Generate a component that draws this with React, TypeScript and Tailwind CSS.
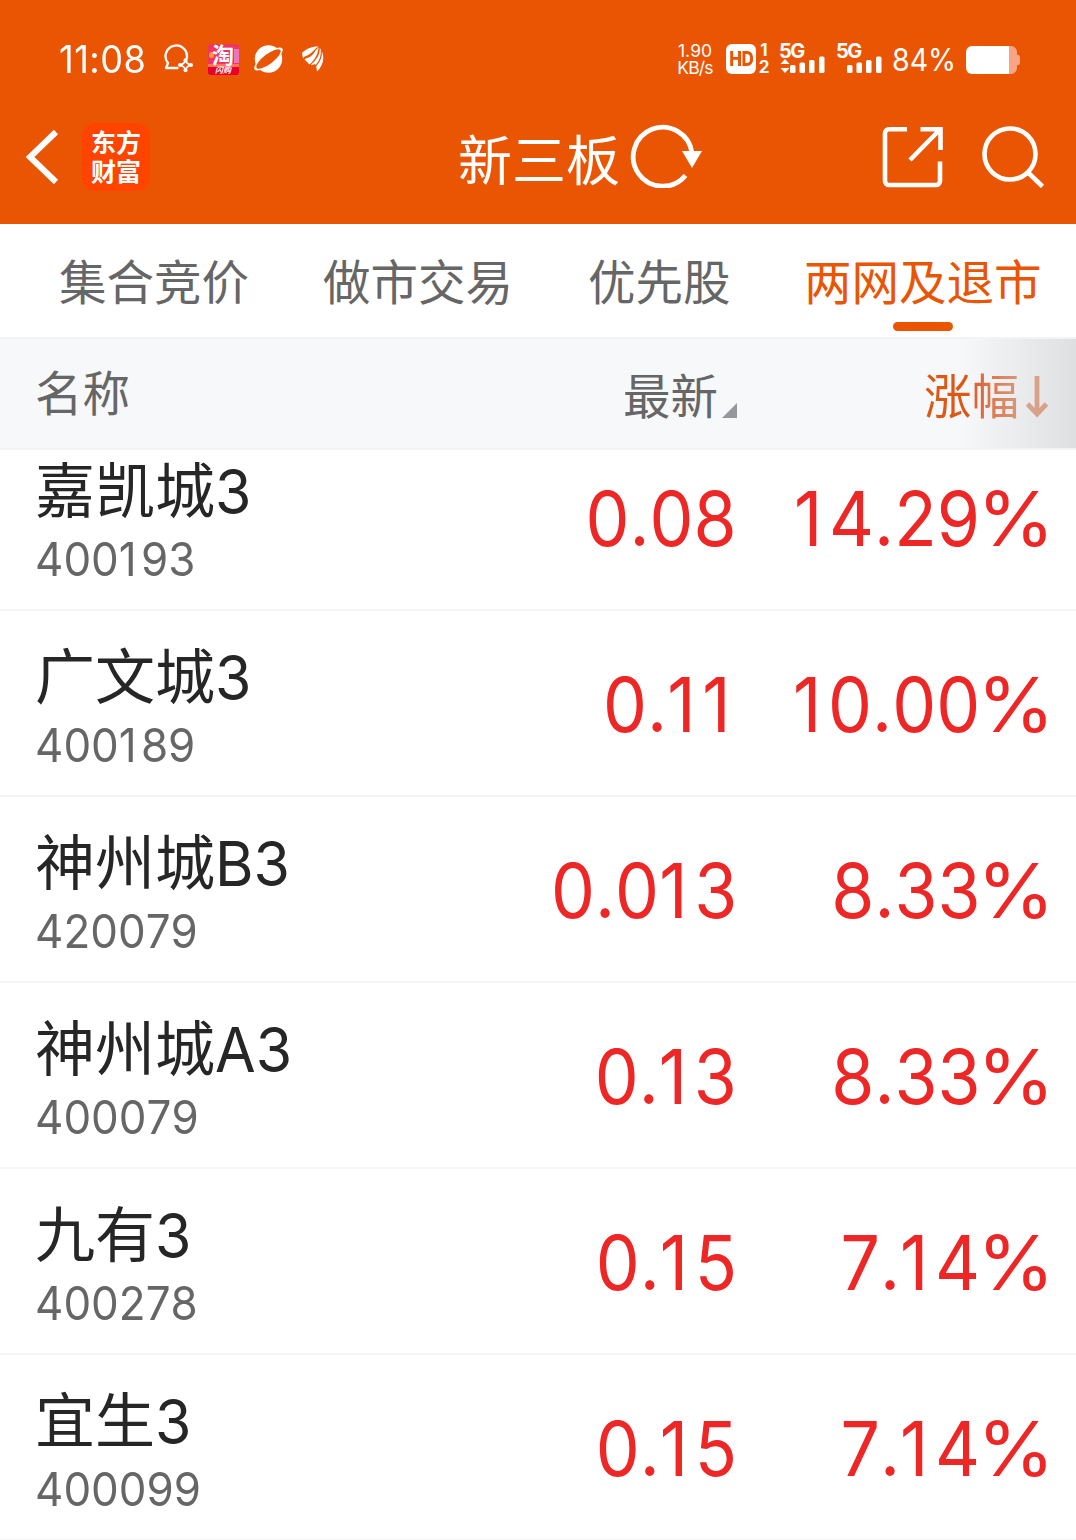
import React from "react";

const stocks = [
  { name: "嘉凯城", suffix: "3", code: "400193", price: "0.08", change: "14.29" },
  { name: "广文城", suffix: "3", code: "400189", price: "0.11", change: "10.00" },
  { name: "神州城", suffix: "B3", code: "420079", price: "0.013", change: "8.33" },
  { name: "神州城", suffix: "A3", code: "400079", price: "0.13", change: "8.33" },
  { name: "九有", suffix: "3", code: "400278", price: "0.15", change: "7.14" },
  { name: "宜生", suffix: "3", code: "400099", price: "0.15", change: "7.14" },
];

/** Digits with a little extra room after each narrow "1". */
function Digits({ value }: { value: string }) {
  return (
    <>
      {value.split(/(1)/).map((part, i) =>
        part === "1" ? (
          <span key={i} className="tracking-[0.095em]">1</span>
        ) : (
          part
        ),
      )}
    </>
  );
}

function Signal({ updown }: { updown?: boolean }) {
  return (
    <div className="relative h-[34px] w-[46px]">
      <span className="absolute left-[-1px] top-0 text-[20px] font-bold leading-[18px] tracking-[-1.5px]">5G</span>
      <svg className="absolute left-0 top-0" width="46" height="34" viewBox="0 0 46 34" fill="currentColor">
        {updown && <path d="M5 17l4.500 5h-9zM.5 26h9L5 31z" />}
        <rect x="10" y="23" width="5.500" height="8" rx="1.500" />
        <rect x="19.500" y="20.500" width="5.500" height="10.500" rx="1.500" />
        <rect x="29" y="18" width="5.500" height="13" rx="1.500" />
        <rect x="39" y="14.500" width="5.500" height="16.500" rx="1.500" />
      </svg>
    </div>
  );
}

function StatusBar() {
  return (
    <div className="flex h-[90px] items-center pt-[28px]">
      <div className="ml-[59px] w-[104px] whitespace-nowrap text-[38px] leading-[62px]">
        <span className="inline-block origin-left scale-x-[0.95] tracking-[0.5px]">11:08</span>
      </div>
      <svg width="31" height="30" viewBox="0 0 31 30" fill="none" stroke="currentColor">
        <path d="M14.500 24H3l2-5A10.700 10.700 0 1 1 23.700 14.500" strokeWidth="2.300" strokeLinejoin="round" strokeLinecap="round" />
        <path d="M22.500 16q1 4 5.500 5-4.500 1-5.500 5.500-1-4.500-5.500-5.500 4.500-1 5.500-5z" strokeWidth="1.700" />
        <g fill="currentColor" stroke="none">
          <circle cx="22.500" cy="16.300" r="2" />
          <circle cx="28" cy="21" r="2" />
          <circle cx="22.500" cy="26.300" r="2" />
          <circle cx="17" cy="21" r="2" />
        </g>
      </svg>
      <div className="relative ml-[14px] h-[31px] w-[31px] rounded-[3px] bg-[#f03562]">
        <div className="absolute bottom-0 h-[9px] w-full rounded-b-[3px] bg-[#e8002d]" />
        <div className="absolute left-[1px] top-[8px] h-[6px] w-[5px] rounded-full bg-[#ff9b22]" />
        <div className="absolute right-0 top-[5px] h-[14px] w-[5px] bg-[#e875bd]" />
        <div className="absolute bottom-[8px] h-[3px] w-full bg-[#fa7654]" />
        <span className="absolute left-[4px] top-0 text-[22px] font-bold leading-[22px]">淘</span>
        <span className="absolute bottom-0 left-[7px] whitespace-nowrap text-[8px] font-bold italic leading-[10px]">闪购</span>
      </div>
      <svg className="ml-[14px]" width="32" height="30" viewBox="0 0 32 30">
        <circle cx="15.500" cy="15" r="13.700" fill="currentColor" />
        <g transform="rotate(-37 15.500 15)">
          <ellipse cx="15.500" cy="15" rx="17.300" ry="5.800" fill="currentColor" />
          <ellipse cx="15.500" cy="15" rx="14.800" ry="4.900" fill="#ea5504" />
        </g>
      </svg>
      <svg className="ml-[16px]" width="25" height="28" viewBox="0 0 25 28" fill="currentColor">
        <path d="M1 8C6 3 11 1.500 18 1.500 14 3 12 7 8 9.500 5.500 11 3 11 2 13.500Z" />
        <path d="M17.500 2.500C14 5 13 9 9.500 11.500 7 13 5 13 3.500 14.500L8.500 19.500C14 15 17 9 17.500 2.500Z" />
        <path d="M18.800 3C19 10 15 15.500 10 19.500l1 .5c2-1 3-1 4 0l1 6.500C23 20 24.500 10 18.800 3Z" />
        <path d="M20.300 5C21 12 18.500 17 14.500 21" fill="none" stroke="#ea5504" strokeWidth="1.100" />
      </svg>

      <div className="ml-auto w-[38px] text-center text-[17.500px] leading-[17px]">
        <div>1.90</div>
        <div className="-mx-1 tracking-[-0.8px]">KB/s</div>
      </div>
      <div className="ml-[12px] flex h-[30px] w-[30px] items-center justify-center rounded-[6px] bg-white text-[20px] font-extrabold leading-none tracking-[-0.5px] text-[#ea5504]">
        <span className="inline-block scale-x-[0.85]">HD</span>
      </div>
      <div className="ml-[2px] w-[12px] text-center text-[17px] font-bold leading-[17px]">
        <div>1</div>
        <div>2</div>
      </div>
      <div className="ml-[10px]"><Signal updown /></div>
      <div className="ml-[11px]"><Signal /></div>
      <div className="ml-[9px] w-[65px] whitespace-nowrap text-[31px] leading-[60px]">
        <span className="inline-block origin-left translate-y-px scale-x-[0.92]">84%</span>
      </div>
      <svg className="ml-[9px] mr-[56px] mt-[2px]" width="54" height="28" viewBox="0 0 54 28">
        <path d="M42 0h3a6 6 0 0 1 6 6v3h1a2 2 0 0 1 2 2v6a2 2 0 0 1-2 2h-1v3a6 6 0 0 1-6 6h-3z" fill="#f7a582" />
        <path d="M6 0h37v28H6a6 6 0 0 1-6-6V6a6 6 0 0 1 6-6z" fill="#fff" />
      </svg>
    </div>
  );
}

function TitleBar() {
  return (
    <div className="flex h-[134px] items-center">
      <svg className="ml-[24px]" width="38" height="58" viewBox="0 0 38 58" fill="none" stroke="#fff" strokeWidth="6">
        <path d="M32 4L6 29l26 25" />
      </svg>
      <div className="ml-[20px] flex h-[68px] w-[68px] flex-col items-center justify-center rounded-[13px] bg-[#ff4400] pb-[3px] font-['Noto_Sans_CJK_SC'] text-[25px] font-bold leading-[29px]">
        <div>东方</div>
        <div>财富</div>
      </div>
      <h1 className="ml-[308px] mt-[9px] w-[162px] whitespace-nowrap text-[54px] font-normal leading-[70px]">新三板</h1>
      <svg className="-mt-[7px] ml-[10px]" width="72" height="68" viewBox="0 0 72 68">
        <path d="M55.500 55.500A29.500 29.500 0 1 1 62 33" fill="none" stroke="#fff" strokeWidth="4.800" />
        <path d="M52 31h20L62 48z" fill="#fff" />
      </svg>
      <svg className="ml-auto" width="62" height="62" viewBox="0 0 62 62" fill="none" stroke="#fff" strokeWidth="4.600">
        <path d="M25 3.300H7a4 4 0 0 0-4 4V55a4 4 0 0 0 4 4h47a4 4 0 0 0 4-4V35.500M38.500 3.300H58.500V24M57 4.500L28 34" />
      </svg>
      <svg className="ml-[38px] mr-[31px]" width="63" height="62" viewBox="0 0 63 62" fill="none" stroke="#fff" strokeWidth="4.600">
        <circle cx="28" cy="28" r="25.500" />
        <path d="M45.500 46L60.500 60.500" />
      </svg>
    </div>
  );
}

export default function App() {
  return (
    <div className="flex h-[1540px] w-[1076px] flex-col overflow-hidden bg-white font-[Inter,'Noto_Sans_CJK_SC',sans-serif] [font-kerning:none] [font-feature-settings:'calt'_0]">
      <header className="h-[224px] shrink-0 bg-[#ea5504] text-white">
        <StatusBar />
        <TitleBar />
      </header>

      <nav className="flex h-[113px] shrink-0 whitespace-nowrap pl-[59px] text-[47.500px] leading-[117px] text-[#666]">
        <div className="w-[264px]">集合竞价</div>
        <div className="w-[265px]">做市交易</div>
        <div className="w-[216px]">优先股</div>
        <div className="relative text-[#ea5504]">
          两网及退市
          <div className="absolute left-[89px] top-[98px] h-[9px] w-[60px] rounded-full bg-[#ea5504]" />
        </div>
      </nav>

      <div className="relative flex h-[113px] shrink-0 items-center border-y-2 border-[#f2f3f4] bg-[#f7f8fa] text-[47.500px] leading-[112px] text-[#666]">
        <div className="ml-[35px] w-[588px] pt-px">名称</div>
        <div className="flex items-center pt-[6px]">
          最新
          <svg className="ml-[4px] mt-[28px]" width="15" height="15" viewBox="0 0 15 15"><path d="M15 0v15H0z" fill="#97979b" /></svg>
        </div>
        <div className="ml-auto mr-[28px] flex items-center pt-[6px] text-[#ea5504]">
          <span className="bg-linear-to-r from-[#dd5715] from-45% to-[#e3a080] bg-clip-text text-transparent">涨幅</span>
          <svg className="ml-[7px]" width="22" height="42" viewBox="0 0 22 42" fill="none" stroke="#e7ad93" strokeWidth="4.800">
            <path d="M11 0v39M1.500 28l9.500 10 9.500-10" />
          </svg>
        </div>
        <div className="absolute right-0 top-0 h-full w-[116px] bg-linear-to-r from-black/0 to-black/10" />
      </div>

      <main className="min-h-0 flex-1 overflow-hidden">
        <div className="-mt-[25px]">
          {stocks.map((s) => (
            <div key={s.code} className="flex h-[186px] border-b-2 border-[#f4f4f5]">
              <div className="w-[360px] pl-[35px] pt-[31px]">
                <div className="flex h-[72px] whitespace-nowrap text-[60px] leading-[70px] text-[#262626]">
                  <span>{s.name}</span>
                  <span className="origin-left scale-x-[0.95] text-[62px] leading-[72px]">{s.suffix}</span>
                </div>
                <div className="h-[62px] text-[47px] leading-[62px] text-[#666]">
                  <span className="inline-block origin-left scale-x-[0.935]"><Digits value={s.code} /></span>
                </div>
              </div>
              <div className="w-[377px] text-right text-[75px] leading-[188px] text-[#ed2626]">
                <span className="inline-block origin-right scale-x-[0.93]"><Digits value={s.price} /></span>
              </div>
              <div className="flex w-[316px] justify-end text-right text-[75px] leading-[188px] text-[#ed2626]">
                <span className="inline-block origin-right scale-x-[0.93]"><Digits value={s.change} /></span>
                <span className="-ml-px inline-block scale-x-[1.05]">%</span>
              </div>
            </div>
          ))}
        </div>
      </main>
    </div>
  );
}
